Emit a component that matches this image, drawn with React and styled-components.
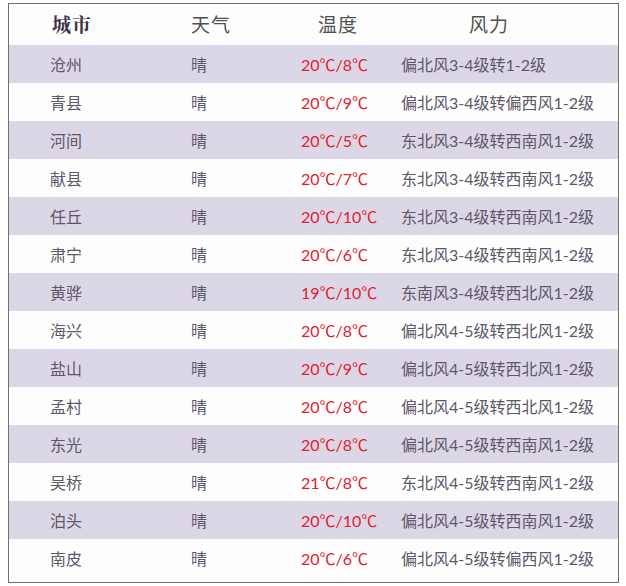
import React from "react";
import styled, { createGlobalStyle } from "styled-components";

const GlobalStyle = createGlobalStyle`
  body {
    margin: 0;
    background: #ffffff;
    font-family: Lato, "Noto Sans CJK SC", sans-serif;
  }
`;

const Frame = styled.div`
  margin: 3px 0 0 8px;
  width: 611px;
  height: 580px;
  border: 1.5px solid #707070;
  background: #fdfdfd;
  box-sizing: border-box;
`;

const Row = styled.div`
  display: grid;
  grid-template-columns: 141px 110px 100px 1fr;
  padding-left: 41px;
  height: ${p => (p.$head ? 39 : 38)}px;
  padding-bottom: ${p => (p.$head ? 2 : 0)}px;
  align-items: center;
  background: ${p => (p.$shade ? "#dcd7e7" : "transparent")};
`;

const HeadCell = styled.div`
  font-size: 19px;
  color: ${p => (p.$strong ? "#3b3148" : "#505050")};
  font-weight: ${p => (p.$strong ? 700 : 400)};
  font-family: ${p => (p.$strong ? '"Noto Serif CJK SC", "Noto Sans CJK SC", serif' : '"Noto Sans CJK SC", sans-serif')};
  padding-left: ${p => p.$shift}px;
  letter-spacing: 1px;
`;

const Cell = styled.div`
  font-size: 16px;
  color: ${p => (p.$hot ? "#e2202e" : "#5e5869")};
  white-space: nowrap;
`;

const rows = [
  ["沧州", "晴", "20℃/8℃", "偏北风3-4级转1-2级"],
  ["青县", "晴", "20℃/9℃", "偏北风3-4级转偏西风1-2级"],
  ["河间", "晴", "20℃/5℃", "东北风3-4级转西南风1-2级"],
  ["献县", "晴", "20℃/7℃", "东北风3-4级转西南风1-2级"],
  ["任丘", "晴", "20℃/10℃", "东北风3-4级转西南风1-2级"],
  ["肃宁", "晴", "20℃/6℃", "东北风3-4级转西南风1-2级"],
  ["黄骅", "晴", "19℃/10℃", "东南风3-4级转西北风1-2级"],
  ["海兴", "晴", "20℃/8℃", "偏北风4-5级转西北风1-2级"],
  ["盐山", "晴", "20℃/9℃", "偏北风4-5级转西北风1-2级"],
  ["孟村", "晴", "20℃/8℃", "偏北风4-5级转西北风1-2级"],
  ["东光", "晴", "20℃/8℃", "偏北风4-5级转西南风1-2级"],
  ["吴桥", "晴", "21℃/8℃", "东北风4-5级转西南风1-2级"],
  ["泊头", "晴", "20℃/10℃", "偏北风4-5级转西南风1-2级"],
  ["南皮", "晴", "20℃/6℃", "偏北风4-5级转偏西风1-2级"],
];

export default function App() {
  return (
    <>
      <GlobalStyle />
      <Frame>
        <Row $head>
          <HeadCell $strong $shift={2}>城市</HeadCell>
          <HeadCell $shift={-4}>天气</HeadCell>
          <HeadCell $shift={17}>温度</HeadCell>
          <HeadCell $shift={68}>风力</HeadCell>
        </Row>
        {rows.map((r, i) => (
          <Row key={r[0]} $shade={i % 2 === 0}>
            <Cell>{r[0]}</Cell>
            <Cell>{r[1]}</Cell>
            <Cell $hot>{r[2]}</Cell>
            <Cell>{r[3]}</Cell>
          </Row>
        ))}
      </Frame>
    </>
  );
}
